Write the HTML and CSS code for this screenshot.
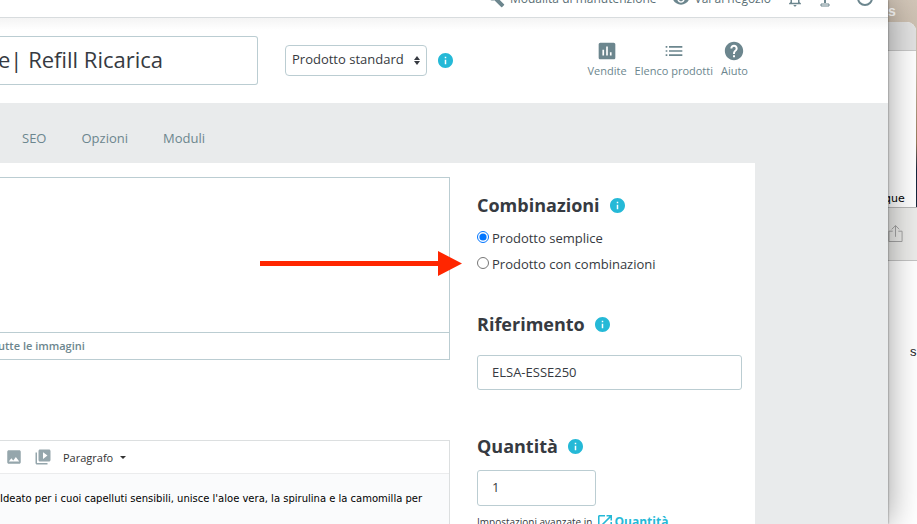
FILE: index.html
```html
<!DOCTYPE html>
<html lang="it">
<head>
    <meta charset="UTF-8">
    <meta name="viewport" content="width=device-width, initial-scale=1.0">
    <title>Prodotto</title>
    <link rel="stylesheet" href="styles.css">
</head>
<body>

    <svg class="sprite" aria-hidden="true">
        <symbol id="icon-info" viewBox="2 2 20 20">
            <path d="M12 2C6.48 2 2 6.48 2 12s4.48 10 10 10 10-4.48 10-10S17.52 2 12 2zm1 15h-2v-6h2v6zm0-8h-2V7h2v2z"/>
        </symbol>
    </svg>

    <div class="app">
        <nav class="topbar">
            <a href="#" class="topbar-link">
                <svg class="icon" viewBox="0 0 24 24"><path d="M22.7 19l-9.1-9.1c.9-2.3.4-5-1.5-6.9-2-2-5-2.400-7.400-1.300L9 6 6 9 1.600 4.700C.4 7.100.9 10.100 2.900 12.100c1.900 1.900 4.600 2.400 6.900 1.500l9.100 9.100c.4.4 1 .4 1.400 0l2.300-2.300c.5-.4.5-1.100.1-1.400z"/></svg>
                Modalità di manutenzione
            </a>
            <a href="#" class="topbar-link">
                <svg class="icon" viewBox="0 0 24 24"><path d="M12 4.500C7 4.500 2.730 7.610 1 12c1.730 4.390 6 7.500 11 7.500s9.270-3.110 11-7.500c-1.730-4.390-6-7.500-11-7.500zM12 17c-2.760 0-5-2.240-5-5s2.240-5 5-5 5 2.240 5 5-2.240 5-5 5zm0-8c-1.660 0-3 1.340-3 3s1.340 3 3 3 3-1.340 3-3-1.340-3-3-3z"/></svg>
                Vai al negozio
            </a>
            <a href="#" class="topbar-link" aria-label="Notifiche">
                <svg class="icon" viewBox="0 0 24 24"><path d="M12 22c1.100 0 2-.9 2-2h-4c0 1.100.9 2 2 2zm6-6v-5c0-3.070-1.630-5.640-4.500-6.320V4c0-.83-.67-1.500-1.500-1.500s-1.500.67-1.500 1.500v.68C7.640 5.360 6 7.920 6 11v5l-2 2v1h16v-1l-2-2zm-2 1H8v-6c0-2.480 1.510-4.500 4-4.500s4 2.020 4 4.500v6z"/></svg>
            </a>
            <a href="#" class="topbar-link" aria-label="Collegamento">
                <svg class="icon icon-stand" viewBox="0 0 12 18"><path d="M1 8h10v2H1zM5 10h2v3H5z"/><path class="line" d="M2 14h8v2H2z"/></svg>
            </a>
            <a href="#" class="topbar-link topbar-account" aria-label="Account">
                <svg class="icon icon-account" viewBox="0 0 18 18"><circle cx="9" cy="8" r="7"/></svg>
            </a>
        </nav>

        <header class="product-header">
            <input type="text" class="product-name" aria-label="Nome del prodotto" value="e| Refill Ricarica">
            <div class="product-type">
                <select aria-label="Tipo di prodotto">
                    <option>Prodotto standard</option>
                </select>
                <svg class="type-arrows" viewBox="0 0 6 9"><path d="M0 4l3-4 3 4zM0 5h6L3 9z"/></svg>
            </div>
            <svg class="info"><use href="#icon-info"/></svg>
            <div class="header-links">
                <a href="#">
                    <svg viewBox="0 0 24 24"><path d="M20 2H4c-1.100 0-2 .9-2 2v16c0 1.100.9 2 2 2h16c1.100 0 2-.9 2-2V4c0-1.100-.9-2-2-2zM8.500 17.500h-2v-7h2v7zm4.500 0h-2v-11h2v11zm4.500 0h-2v-4h2v4z"/></svg>
                    Vendite
                </a>
                <a href="#">
                    <svg viewBox="0 0 24 24"><path d="M2 6h2v2H2zM2 11h2v2H2zM2 16h2v2H2zM6 6h16v2H6zM6 11h16v2H6zM6 16h16v2H6z"/></svg>
                    Elenco prodotti
                </a>
                <a href="#">
                    <svg viewBox="0 0 24 24"><path d="M12 1C5.920 1 1 5.920 1 12s4.920 11 11 11 11-4.920 11-11S18.080 1 12 1zm1.200 18.500h-2.400v-2.400h2.400v2.400zm2.300-8.200l-1 1c-.9.900-1.300 1.500-1.300 3.200h-2.400v-.6c0-1.200.5-2.300 1.300-3.100l1.300-1.400c.4-.3.6-.9.6-1.400 0-1.100-.9-2-2-2s-2 .9-2 2H7.600c0-2.500 1.900-4.400 4.400-4.400s4.400 1.900 4.400 4.400c0 .9-.4 1.700-.9 2.300z"/></svg>
                    Aiuto
                </a>
            </div>
        </header>

        <div class="tabs">
            <a href="#">SEO</a>
            <a href="#">Opzioni</a>
            <a href="#">Moduli</a>
        </div>

        <main class="panel">
            <section class="left">
                <div class="images">
                    <div class="dropzone"></div>
                    <a href="#" class="images-link">utte le immagini</a>
                </div>
                <div class="editor">
                    <div class="editor-toolbar">
                        <button type="button" aria-label="Immagine">
                            <svg viewBox="0 0 24 24"><path d="M21 19V5c0-1.100-.9-2-2-2H5c-1.100 0-2 .9-2 2v14c0 1.100.9 2 2 2h14c1.100 0 2-.9 2-2zM8.500 13.500l2.500 3.010L14.500 12l4.500 6H5l3.500-4.500z"/></svg>
                        </button>
                        <button type="button" aria-label="Video">
                            <svg viewBox="0 0 24 24"><path d="M4 6H2v14c0 1.100.9 2 2 2h14v-2H4V6zm16-4H8c-1.100 0-2 .9-2 2v12c0 1.100.9 2 2 2h12c1.100 0 2-.9 2-2V4c0-1.100-.9-2-2-2zm-8 12.500v-9l6 4.500-6 4.500z"/></svg>
                        </button>
                        <button type="button" class="format">Paragrafo <span class="caret"></span></button>
                    </div>
                    <div class="editor-body">
                        <p>Ideato per i cuoi capelluti sensibili, unisce l'aloe vera, la spirulina e la camomilla per</p>
                    </div>
                </div>
            </section>

            <section class="right">
                <div class="block">
                    <h2>Combinazioni <svg class="info"><use href="#icon-info"/></svg></h2>
                    <div class="radios">
                        <label><input type="radio" name="combinations" checked> Prodotto semplice</label>
                        <label><input type="radio" name="combinations"> Prodotto con combinazioni</label>
                        <svg class="arrow" viewBox="0 0 202 26"><path d="M0 10h178V0l24 12.500L178 25V15H0z"/></svg>
                    </div>
                </div>
                <div class="block block-reference">
                    <h2>Riferimento <svg class="info"><use href="#icon-info"/></svg></h2>
                    <input type="text" class="field" aria-label="Riferimento" value="ELSA-ESSE250">
                </div>
                <div class="block">
                    <h2>Quantità <svg class="info"><use href="#icon-info"/></svg></h2>
                    <input type="text" class="field field-small" aria-label="Quantità" value="1">
                    <p class="hint">
                        Impostazioni avanzate in
                        <a href="#"><svg viewBox="3 3 18 18"><path d="M19 19H5V5h7V3H5c-1.110 0-2 .9-2 2v14c0 1.100.89 2 2 2h14c1.100 0 2-.9 2-2v-7h-2v7zM14 3v2h3.590l-9.830 9.830 1.410 1.410L19 6.410V10h2V3h-7z"/></svg>Quantità</a>
                    </p>
                </div>
            </section>
        </main>
    </div>

    <!-- windows behind the app -->
    <aside class="desktop">
        <span class="desktop-label">s</span>
        <div class="back-window">
            <div class="back-title"></div>
            <div class="back-content">que</div>
        </div>
        <div class="front-toolbar">
            <svg viewBox="0 0 16 20"><path d="M5 7H1v11h14V7h-4M8 13V1M4 5l4-4 4 4"/></svg>
        </div>
        <div class="front-content">s</div>
    </aside>

</body>
</html>
```
FILE: styles.css
```css
* {
    box-sizing: border-box;
}
body {
    margin: 0;
    display: flex;
    height: 100vh;
    overflow: hidden;
    font-family: "Open Sans", "Noto Sans", sans-serif;
    font-size: 12px;
    color: #363a41;
}
a {
    color: #6c868e;
    text-decoration: none;
}
svg {
    fill: currentColor;
    flex: none;
}
.sprite {
    position: absolute;
    width: 0;
    height: 0;
}
.app {
    position: relative;
    z-index: 1;
    flex: 1;
    min-width: 0;
    display: flex;
    flex-direction: column;
    background: #e9ebec;
    box-shadow: 0 0 2px rgba(0, 0, 0, 0.5), 0 0 32px rgba(0, 0, 0, 0.4);
}

/* top bar */
.topbar {
    flex: none;
    height: 18px;
    display: flex;
    align-items: flex-end;
    justify-content: flex-end;
    gap: 15px;
    padding: 0 14px 9px 0;
    overflow: hidden;
    background: #fff;
    border-bottom: 1px solid #d8dcde;
}
.topbar-link {
    display: flex;
    align-items: center;
    gap: 5px;
    line-height: 18px;
    color: #5b6f76;
}
.topbar .icon {
    width: 18px;
    height: 18px;
    color: #6c868e;
}
.topbar .icon-stand {
    width: 12px;
}
.icon-stand .line {
    fill: none;
    stroke: currentColor;
    stroke-width: 1;
}
.topbar-account {
    margin-left: 10px;
}
.icon-account circle {
    fill: none;
    stroke: currentColor;
    stroke-width: 2;
}

/* product header */
.product-header {
    flex: none;
    height: 85px;
    display: flex;
    align-items: center;
    padding-right: 140px;
    background: linear-gradient(#f4f4f4, #fff 12px);
}
.product-name {
    width: 258px;
    height: 49px;
    padding: 0 0 3px;
    border: 1px solid #bbcdd2;
    border-left: none;
    border-radius: 0 3px 3px 0;
    background: #fff;
    font: 22px "Open Sans", sans-serif;
    text-indent: -2px;
    color: #363a41;
}
.product-type {
    position: relative;
    margin: 0 11px 0 27px;
}
.product-type select {
    appearance: none;
    width: 142px;
    height: 31px;
    padding: 0 6px 3px;
    border: 1px solid #bbcdd2;
    border-radius: 4px;
    background: #fff;
    font: 13px "Open Sans", sans-serif;
    color: #363a41;
}
.type-arrows {
    position: absolute;
    right: 7px;
    top: 11px;
    width: 6px;
    height: 9px;
}
.info {
    width: 15px;
    height: 15px;
    color: #25b9d7;
}
.header-links {
    display: flex;
    gap: 8px;
    margin-left: auto;
    padding-bottom: 2px;
    font-size: 11px;
    line-height: 16px;
}
.header-links a {
    display: flex;
    flex-direction: column;
    align-items: center;
    gap: 2px;
}
.header-links svg {
    width: 20px;
    height: 20px;
}

/* tabs */
.tabs {
    flex: none;
    display: flex;
    gap: 35px;
    height: 60px;
    padding: 26px 22px 0;
    font-size: 13px;
    line-height: 18px;
}

/* panel */
.panel {
    flex: 1;
    display: grid;
    grid-template-columns: 1fr 265px;
    gap: 27px;
    margin-right: 133px;
    padding: 14px 13px 0 0;
    background: #fff;
}
.left {
    display: flex;
    flex-direction: column;
}
.images {
    border: 1px solid #bbcdd2;
    border-left: none;
    margin-bottom: 80px;
}
.dropzone {
    height: 155px;
    border-bottom: 1px solid #bbcdd2;
}
.images-link {
    display: block;
    font-size: 11px;
    font-weight: 600;
    line-height: 26px;
    text-indent: -2px;
}
.editor {
    flex: 1;
    display: flex;
    flex-direction: column;
    border: 1px solid #dcdfe0;
    border-left: none;
    border-bottom: none;
}
.editor-toolbar {
    display: flex;
    align-items: center;
    gap: 11px;
    height: 33px;
    padding-left: 5px;
    border-bottom: 1px solid #ebeced;
}
.editor-toolbar button {
    display: flex;
    align-items: center;
    padding: 0;
    border: none;
    background: none;
    color: #95a6ac;
}
.editor-toolbar svg {
    width: 18px;
    height: 18px;
}
.editor-toolbar .format {
    gap: 7px;
    font: 11px "Open Sans", sans-serif;
    color: #333;
}
.caret {
    border: 3px solid transparent;
    border-top-color: #333;
    border-bottom: none;
}
.editor-body {
    flex: 1;
    padding: 16px 0 0;
    background: #fafbfc;
    font: 10px/18px Verdana, "DejaVu Sans", sans-serif;
    color: #000;
}
.editor-body p {
    margin: 0;
}

.right {
    padding-top: 15px;
}
.block {
    margin-bottom: 38px;
}
.block h2 {
    display: flex;
    align-items: center;
    gap: 10px;
    margin: 0 0 11px;
    font-size: 18px;
    font-weight: 700;
    line-height: 26px;
}
.block-reference {
    margin-bottom: 43px;
}
.block-reference h2 {
    margin-bottom: 18px;
}
.radios {
    position: relative;
    display: flex;
    flex-direction: column;
    gap: 8px;
    font-size: 13px;
    line-height: 18px;
}
.radios label {
    display: flex;
    align-items: center;
    gap: 3px;
}
.radios input {
    width: 12px;
    height: 12px;
    margin: 0 0 3px;
}
.arrow {
    position: absolute;
    right: calc(100% + 15px);
    bottom: -4px;
    width: 202px;
    height: 26px;
    color: #ff2600;
}
.field {
    display: block;
    width: 100%;
    height: 35px;
    padding: 0 14px 2px;
    border: 1px solid #bbcdd2;
    border-radius: 3px;
    font: 13px "Open Sans", sans-serif;
    color: #363a41;
}
.field-small {
    width: 119px;
    height: 36px;
}
.hint {
    display: flex;
    align-items: center;
    gap: 6px;
    margin: 7px 0 0;
    font-size: 10px;
    line-height: 18px;
}
.hint a {
    display: flex;
    align-items: center;
    gap: 2px;
    font-size: 12px;
    font-weight: 700;
    color: #25b9d7;
}
.hint svg {
    width: 14px;
    height: 14px;
}

/* desktop behind */
.desktop {
    width: 29px;
    display: flex;
    flex-direction: column;
    overflow: hidden;
    background: linear-gradient(#d2c6b8, #c6b7a6 70px, #96795a 143px, #16263c 170px);
    font-family: "Liberation Sans", sans-serif;
}
.desktop-label {
    height: 22px;
    line-height: 22px;
    font-size: 14px;
    font-weight: 700;
    color: #fff;
}
.back-window {
    display: flex;
    flex-direction: column;
    height: 185px;
    margin-right: 1px;
    border-top-right-radius: 9px;
    overflow: hidden;
    background: #fff;
}
.back-title {
    height: 29px;
    background: #e2e2e2;
    border-bottom: 1px solid #c8c8c8;
}
.back-content {
    margin-top: auto;
    margin-left: -4px;
    font: 11px/16px "DejaVu Sans", sans-serif;
    color: #000;
}
.front-toolbar {
    display: flex;
    align-items: center;
    height: 54px;
    background: #ececea;
    border-top: 1px solid #b8b8b8;
    border-bottom: 1px solid #c4c4c4;
}
.front-toolbar svg {
    width: 15px;
    height: 20px;
    fill: none;
    stroke: #a0a0a0;
    stroke-width: 1;
}
.front-content {
    flex: 1;
    padding: 82px 0 0 22px;
    background: #fff;
    font-size: 13px;
    line-height: 18px;
    color: #222;
}
```
